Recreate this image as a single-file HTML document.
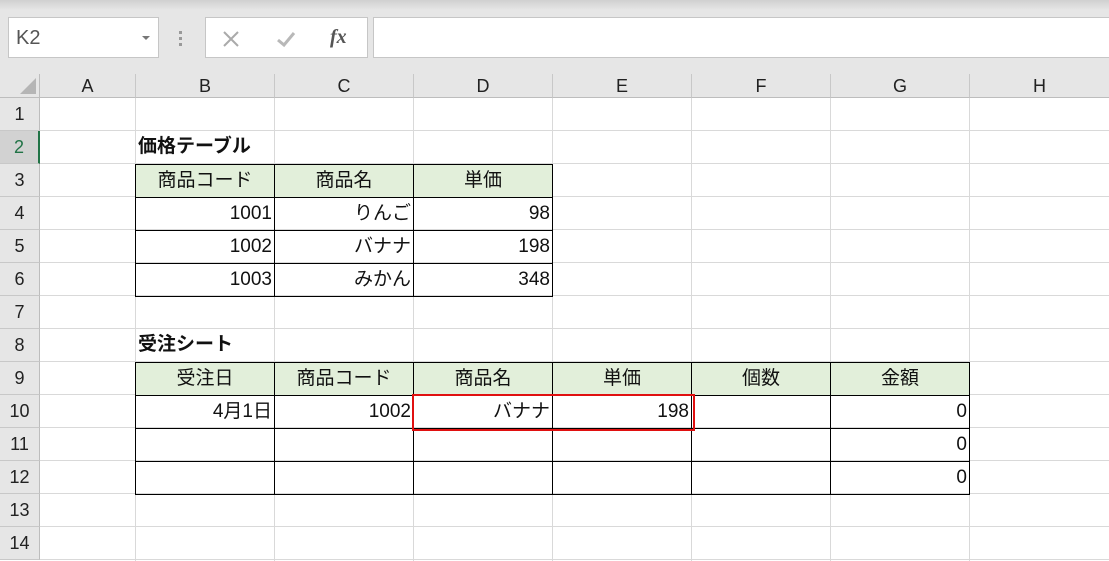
<!DOCTYPE html>
<html><head><meta charset="utf-8"><style>
*{margin:0;padding:0;box-sizing:border-box}
body{width:1109px;height:561px;overflow:hidden;background:#fff;position:relative;font-family:"Liberation Sans","Noto Sans CJK JP",sans-serif}
.a{position:absolute}
.top{left:0;top:0;width:1109px;height:74px;background:linear-gradient(#d0d0d0,#e6e6e6 10px)}
.box{background:#fff;border:1px solid #c6c6c6}
.ch{top:74px;height:24px;background:#e6e6e6;border-right:1px solid #c8c8c8;border-bottom:1px solid #bdbdbd;text-align:center;font-size:18px;line-height:24px;color:#222}
.rh{left:0;width:40px;height:33px;background:#e6e6e6;border-bottom:1px solid #c8c8c8;border-right:1px solid #bdbdbd;text-align:center;font-size:18px;line-height:32px;color:#222}
.vl{top:98px;width:1px;height:463px;background:#d9d9d9}
.hl{left:40px;width:1069px;height:1px;background:#d9d9d9}
.c{font-size:19px;line-height:32px;height:33px;padding:0 2px;color:#111;white-space:nowrap}
.g{background:#e2efda;text-align:center}
.r{text-align:right}
.b{font-weight:bold}
</style></head><body>
<div class="a top"></div>
<div class="a box" style="left:8px;top:17px;width:151px;height:41px;font-size:20px;color:#555;padding:9px 0 0 7px">K2<span style="position:absolute;left:133px;top:18px;width:0;height:0;border-left:4px solid transparent;border-right:4px solid transparent;border-top:4px solid #777"></span></div>
<div class="a" style="left:179px;top:31px;width:3px;height:3px;background:#999;box-shadow:0 6px 0 #999,0 12px 0 #999"></div>
<div class="a box" style="left:205px;top:17px;width:163px;height:41px"></div>
<svg class="a" style="left:222px;top:30px" width="18" height="18"><path d="M2 2L16 16M16 2L2 16" stroke="#aaa" stroke-width="2"/></svg>
<svg class="a" style="left:276px;top:30px" width="20" height="18"><path d="M2 10L8 15L18 3" stroke="#b8b8b8" stroke-width="3" fill="none"/></svg>
<div class="a" style="left:330px;top:26px;font:italic bold 20px 'Liberation Serif',serif;color:#555">fx</div>
<div class="a box" style="left:373px;top:17px;width:740px;height:41px"></div>

<div class="a" style="left:0;top:74px;width:40px;height:24px;background:#e6e6e6;border-right:1px solid #bdbdbd;border-bottom:1px solid #bdbdbd"></div>
<svg class="a" style="left:19px;top:77px" width="18" height="18"><path d="M17 1L17 17L1 17Z" fill="#b5b5b5"/></svg>
<div class="a ch" style="left:40px;width:96px">A</div>
<div class="a ch" style="left:136px;width:139px">B</div>
<div class="a ch" style="left:275px;width:139px">C</div>
<div class="a ch" style="left:414px;width:139px">D</div>
<div class="a ch" style="left:553px;width:139px">E</div>
<div class="a ch" style="left:692px;width:139px">F</div>
<div class="a ch" style="left:831px;width:139px">G</div>
<div class="a ch" style="left:970px;width:139px;border-right:0">H</div>

<div class="a rh" style="top:98px">1</div>
<div class="a rh" style="top:131px;background:#d2d2d2;color:#217346;border-right:2px solid #217346">2</div>
<div class="a rh" style="top:164px">3</div>
<div class="a rh" style="top:197px">4</div>
<div class="a rh" style="top:230px">5</div>
<div class="a rh" style="top:263px">6</div>
<div class="a rh" style="top:296px">7</div>
<div class="a rh" style="top:329px">8</div>
<div class="a rh" style="top:362px">9</div>
<div class="a rh" style="top:395px">10</div>
<div class="a rh" style="top:428px">11</div>
<div class="a rh" style="top:461px">12</div>
<div class="a rh" style="top:494px">13</div>
<div class="a rh" style="top:527px">14</div>

<div class="a vl" style="left:135px"></div><div class="a vl" style="left:274px"></div><div class="a vl" style="left:413px"></div><div class="a vl" style="left:552px"></div><div class="a vl" style="left:691px"></div><div class="a vl" style="left:830px"></div><div class="a vl" style="left:969px"></div>
<div class="a hl" style="top:130px"></div><div class="a hl" style="top:163px"></div><div class="a hl" style="top:196px"></div><div class="a hl" style="top:229px"></div><div class="a hl" style="top:262px"></div><div class="a hl" style="top:295px"></div><div class="a hl" style="top:328px"></div><div class="a hl" style="top:361px"></div><div class="a hl" style="top:394px"></div><div class="a hl" style="top:427px"></div><div class="a hl" style="top:460px"></div><div class="a hl" style="top:493px"></div><div class="a hl" style="top:526px"></div><div class="a hl" style="top:559px"></div>

<div class="a c b" style="left:136px;top:131px">価格テーブル</div>
<table class="a" style="left:135px;top:164px;border-collapse:collapse">
<tr><td class="c g" style="width:139px;border:1px solid #000">商品コード</td><td class="c g" style="width:139px;border:1px solid #000">商品名</td><td class="c g" style="width:139px;border:1px solid #000">単価</td></tr>
<tr><td class="c r" style="border:1px solid #000">1001</td><td class="c r" style="border:1px solid #000">りんご</td><td class="c r" style="border:1px solid #000">98</td></tr>
<tr><td class="c r" style="border:1px solid #000">1002</td><td class="c r" style="border:1px solid #000">バナナ</td><td class="c r" style="border:1px solid #000">198</td></tr>
<tr><td class="c r" style="border:1px solid #000">1003</td><td class="c r" style="border:1px solid #000">みかん</td><td class="c r" style="border:1px solid #000">348</td></tr>
</table>

<div class="a c b" style="left:136px;top:329px">受注シート</div>
<table class="a" style="left:135px;top:362px;border-collapse:collapse">
<tr><td class="c g" style="width:139px;border:1px solid #000">受注日</td><td class="c g" style="width:139px;border:1px solid #000">商品コード</td><td class="c g" style="width:139px;border:1px solid #000">商品名</td><td class="c g" style="width:139px;border:1px solid #000">単価</td><td class="c g" style="width:139px;border:1px solid #000">個数</td><td class="c g" style="width:139px;border:1px solid #000">金額</td></tr>
<tr><td class="c r" style="border:1px solid #000">4月1日</td><td class="c r" style="border:1px solid #000">1002</td><td class="c r" style="border:1px solid #000">バナナ</td><td class="c r" style="border:1px solid #000">198</td><td class="c r" style="border:1px solid #000"></td><td class="c r" style="border:1px solid #000">0</td></tr>
<tr><td class="c r" style="border:1px solid #000"></td><td class="c r" style="border:1px solid #000"></td><td class="c r" style="border:1px solid #000"></td><td class="c r" style="border:1px solid #000"></td><td class="c r" style="border:1px solid #000"></td><td class="c r" style="border:1px solid #000">0</td></tr>
<tr><td class="c r" style="border:1px solid #000"></td><td class="c r" style="border:1px solid #000"></td><td class="c r" style="border:1px solid #000"></td><td class="c r" style="border:1px solid #000"></td><td class="c r" style="border:1px solid #000"></td><td class="c r" style="border:1px solid #000">0</td></tr>
</table>
<div class="a" style="left:412px;top:394px;width:283px;height:37px;border:2px solid #e01010"></div>
</body></html>
